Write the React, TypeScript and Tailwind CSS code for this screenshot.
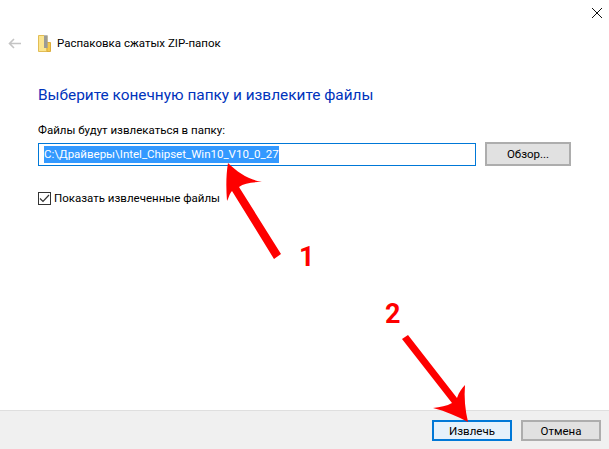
const Arrows = () => (
  <svg className="absolute left-0 top-0 pointer-events-none" width="609" height="449" viewBox="0 0 609 449" fill="none">
    {/* arrow 1 */}
    <path d="M228 163 C238 173 250 180 262 182 C252 182 244 183 239 187 L281 254 L274 259 L232 191 C229 194 229 198 227 201 C226 188 226 175 228 163 Z" fill="#fe0000" />
    {/* arrow 2 */}
    <path d="M408 335 L457 398 C459 392 462 388 465 385 C464 397 465 410 468 422 C457 416 445 411 433 408 C440 407 447 406 452 403 L402 339 Z" fill="#fe0000" />
  </svg>
);

const ZipIcon = () => (
  <svg width="13" height="17" viewBox="0 0 13 17">
    <path d="M0.5 0.5H9V16.5H0.5Z" fill="#fbe58f" stroke="#e2bd55" />
    <path d="M9 7.5H12.5V16.5H9Z" fill="#f3c94f" stroke="#dcae3e" />
    <rect x="6" y="0" width="3.5" height="13" fill="#b9b9b3" />
    <path d="M6 2H9.5M6 4H9.5M6 6H9.5M6 8H9.5M6 10H9.5M6 12H9.5" stroke="#6f6f6a" strokeWidth="0.8" />
  </svg>
);

export default function App() {
  return (
    <div className="relative w-[609px] h-[449px] flex flex-col bg-white font-['Roboto',sans-serif] text-[11.5px] leading-[16px] text-black overflow-hidden">
      <div className="flex justify-end h-[30px] pt-[8px] pr-[7px]">
        <svg width="10" height="10" viewBox="0 0 10 10" stroke="#111" strokeWidth="1">
          <path d="M0 0L10 10M10 0L0 10" />
        </svg>
      </div>

      <div className="flex items-center h-[26px] pl-[8px]">
        <svg width="13" height="11" viewBox="0 0 13 11" fill="none" stroke="#c4c4c4" strokeWidth="1.6">
          <path d="M13 5.5H1.5M6 1L1.5 5.5L6 10" />
        </svg>
        <div className="ml-[17px] flex">
          <ZipIcon />
        </div>
        <span className="ml-[6px]">Распаковка сжатых ZIP-папок</span>
      </div>

      <div className="flex-1 pl-[38px] pr-[38px] flex flex-col">
        <h1 className="mt-[28px] text-[15.4px] leading-[22px] text-[#0033bc] font-normal">
          Выберите конечную папку и извлеките файлы
        </h1>
        <label className="mt-[16px]">Файлы будут извлекаться в папку:</label>
        <div className="mt-[4px] flex gap-[9px] items-center">
          <div className="w-[438px] h-[23px] border border-[#0078d7] flex items-center pl-[5px]">
            <span className="bg-[#3399ff] text-white h-[17px] leading-[17px] w-[235px] whitespace-nowrap">
              C:\Драйверы\Intel_Chipset_Win10_V10_0_27
            </span>
          </div>
          <button className="w-[86px] h-[24px] bg-[#e1e1e1] border-2 border-[#adadad] flex items-center justify-center">
            Обзор...
          </button>
        </div>
        <div className="mt-[24px] flex items-center gap-[3px]">
          <span className="w-[13px] h-[13px] border border-[#333] flex items-center justify-center">
            <svg width="11" height="9" viewBox="0 0 11 9" fill="none" stroke="#333" strokeWidth="1.2">
              <path d="M1 4.5L4 7.5L10 1" />
            </svg>
          </span>
          <span>Показать извлеченные файлы</span>
        </div>
      </div>

      <div className="h-[39px] bg-[#f0f0f0] border-t border-[#dfdfdf] flex items-start justify-end gap-[9px] pt-[9px] pr-[8px]">
        <button className="w-[80px] h-[21px] bg-[#e5f1fb] border-2 border-[#0078d7] flex items-center justify-center">
          Извлечь
        </button>
        <button className="w-[80px] h-[21px] bg-[#e1e1e1] border-2 border-[#adadad] flex items-center justify-center">
          Отмена
        </button>
      </div>

      <Arrows />
      <span className="absolute left-[299px] top-[240px] text-[27px] leading-[34px] font-bold text-[#fe0000]">1</span>
      <span className="absolute left-[385px] top-[297px] text-[27px] leading-[34px] font-bold text-[#fe0000]">2</span>
    </div>
  );
}
